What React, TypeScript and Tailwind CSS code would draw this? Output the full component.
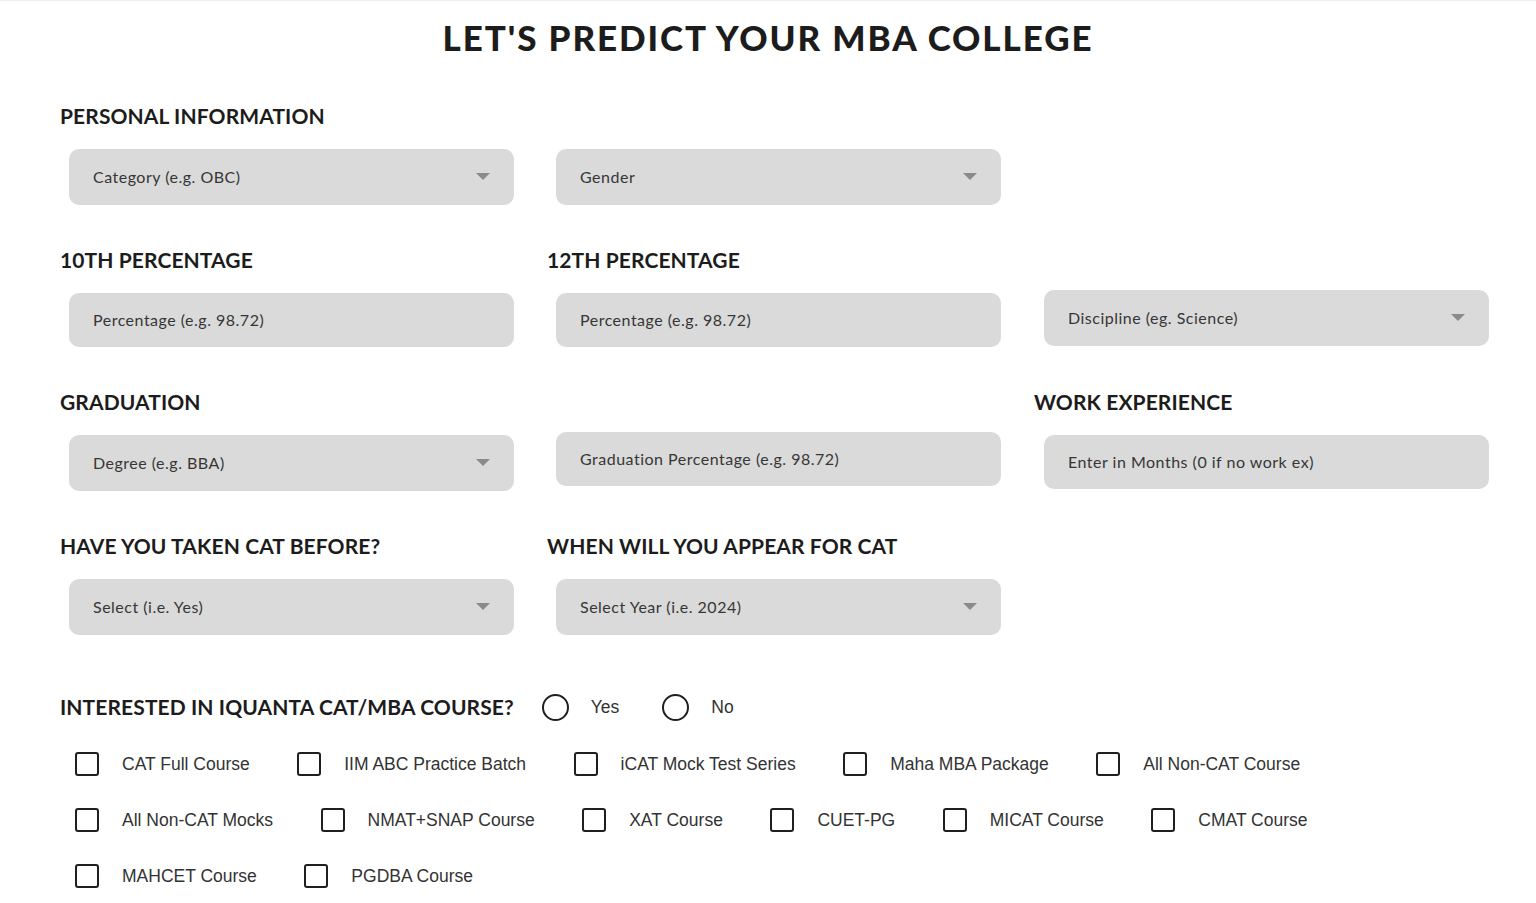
import React from 'react'

const heading = "font-['Lato',sans-serif] font-bold text-[21px] leading-[28px] text-[#1c1c1c] tracking-[0.1px]"
const fieldBase =
  "ml-[9px] w-[445px] rounded-[10px] bg-[#dadada] flex items-center justify-between pl-6 pr-6 font-['Lato',sans-serif] text-[16px] tracking-[0.5px] text-[#363636]"
const rowGrid = 'grid grid-cols-[454px_454px_454px] gap-x-[33px]'

function Select({ text }: { text: string }) {
  return (
    <div className={`${fieldBase} h-14`}>
      <span>{text}</span>
      <svg width="14" height="8" viewBox="0 0 14 8">
        <path d="M0 0 L14 0 L7 7 Z" fill="#8a8a8a" />
      </svg>
    </div>
  )
}

function Input({ text }: { text: string }) {
  return (
    <div className={`${fieldBase} h-[54px]`}>
      <span>{text}</span>
    </div>
  )
}

function Cell({ label, children }: { label?: string; children?: React.ReactNode }) {
  return (
    <div className="flex flex-col">
      <div className={`${heading} h-7 mb-[19px]`}>{label ?? ''}</div>
      {children}
    </div>
  )
}

function Radio({ text, className }: { text: string; className: string }) {
  return (
    <label className={`${className} flex items-center gap-[22px]`}>
      <span className="w-[27px] h-[27px] rounded-full border-[2.5px] border-[#1f1f1f]" />
      <span className="font-['Liberation_Sans',sans-serif] text-[17.5px] text-[#333]">{text}</span>
    </label>
  )
}

const courseRows = [
  ['CAT Full Course', 'IIM ABC Practice Batch', 'iCAT Mock Test Series', 'Maha MBA Package', 'All Non-CAT Course'],
  ['All Non-CAT Mocks', 'NMAT+SNAP Course', 'XAT Course', 'CUET-PG', 'MICAT Course', 'CMAT Course'],
  ['MAHCET Course', 'PGDBA Course'],
]

export default function App() {
  return (
    <div className="min-h-[903px] bg-white border-t border-[#eeeeee]">
      <h1 className="pt-[12px] text-center font-['Lato',sans-serif] font-black text-[35px] leading-[48px] tracking-[1.9px] text-[#1c1c1c]">
        LET'S PREDICT YOUR MBA COLLEGE
      </h1>

      <div className="pl-[60px] pt-[41px] flex flex-col gap-[41px]">
        <div className={rowGrid}>
          <Cell label="PERSONAL INFORMATION">
            <Select text="Category (e.g. OBC)" />
          </Cell>
          <Cell>
            <Select text="Gender" />
          </Cell>
        </div>

        <div className={rowGrid}>
          <Cell label="10TH PERCENTAGE">
            <Input text="Percentage (e.g. 98.72)" />
          </Cell>
          <Cell label="12TH PERCENTAGE">
            <Input text="Percentage (e.g. 98.72)" />
          </Cell>
          <Cell>
            <div className="-mt-[3px] pl-px">
              <Select text="Discipline (eg. Science)" />
            </div>
          </Cell>
        </div>

        <div className={rowGrid}>
          <Cell label="GRADUATION">
            <Select text="Degree (e.g. BBA)" />
          </Cell>
          <Cell>
            <div className="-mt-[3px]">
              <Input text="Graduation Percentage (e.g. 98.72)" />
            </div>
          </Cell>
          <Cell label="WORK EXPERIENCE">
            <div className="pl-px">
              <Input text="Enter in Months (0 if no work ex)" />
            </div>
          </Cell>
        </div>

        <div className={rowGrid}>
          <Cell label="HAVE YOU TAKEN CAT BEFORE?">
            <Select text="Select (i.e. Yes)" />
          </Cell>
          <Cell label="WHEN WILL YOU APPEAR FOR CAT">
            <Select text="Select Year (i.e. 2024)" />
          </Cell>
        </div>
      </div>

      <div className="pl-[60px] mt-[58px] flex items-center h-7">
        <span className={heading}>INTERESTED IN IQUANTA CAT/MBA COURSE?</span>
        <Radio text="Yes" className="ml-[28px]" />
        <Radio text="No" className="ml-[43px]" />
      </div>

      <div className="pl-[75px] mt-[31px] flex flex-col gap-[32px]">
        {courseRows.map((row, i) => (
          <div key={i} className="flex gap-x-[47.5px]">
            {row.map((c) => (
              <label key={c} className="flex items-center gap-[23px] h-6">
                <span className="w-6 h-6 rounded-[3px] border-[2.5px] border-[#1f1f1f]" />
                <span className="font-['Liberation_Sans',sans-serif] text-[17.5px] text-[#333]">{c}</span>
              </label>
            ))}
          </div>
        ))}
      </div>
    </div>
  )
}
